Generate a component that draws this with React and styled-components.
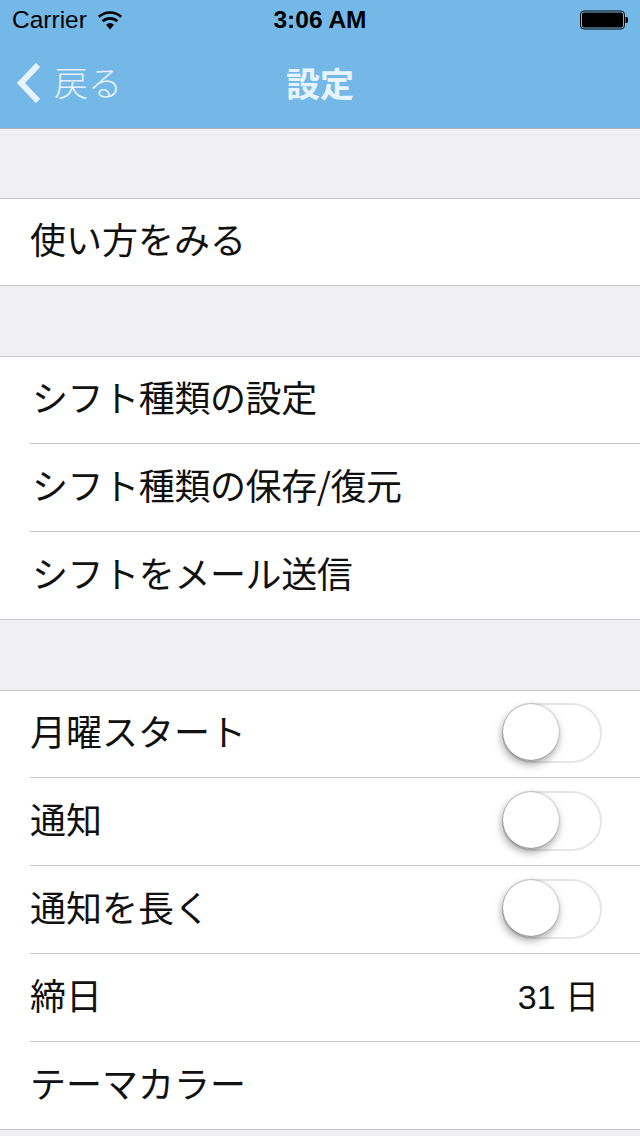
import React from 'react';
import styled, { createGlobalStyle } from 'styled-components';

const GlobalStyle = createGlobalStyle`
  html, body {
    margin: 0;
    padding: 0;
    background: #efeff4;
  }
  body {
    font-family: "Noto Sans CJK JP", "Liberation Sans", sans-serif;
  }
`;

const Screen = styled.div`
  width: 640px;
  height: 1136px;
  overflow: hidden;
  background: #efeff4;
`;

const Header = styled.header`
  height: 128px;
  background: #74b8e8;
  border-bottom: 1px solid #b5b0b2;
  display: flex;
  flex-direction: column;
`;

const StatusBar = styled.div`
  height: 40px;
  padding: 0 12px;
  display: grid;
  grid-template-columns: 1fr auto 1fr;
  align-items: center;
  font-family: "Liberation Sans", sans-serif;
  font-size: 24.5px;
  color: #000;
`;

const Carrier = styled.div`
  display: flex;
  align-items: center;
  gap: 10px;
`;

const Clock = styled.div`
  font-weight: 700;
`;

const Battery = styled.svg`
  justify-self: end;
`;

const NavBar = styled.div`
  position: relative;
  height: 88px;
  display: flex;
  align-items: center;
  justify-content: center;
`;

const Back = styled.div`
  position: absolute;
  left: 16px;
  top: 22px;
  display: flex;
  align-items: center;
  gap: 12px;
  font-size: 34px;
  line-height: 44px;
  font-weight: 300;
  color: #e4f1fb;
`;

const BackLabel = styled.span`
  margin-top: -2px;
`;

const Title = styled.div`
  font-size: 34px;
  font-weight: 700;
  color: #e8f4fd;
  line-height: 44px;
  margin-top: -2px;
`;

const Section = styled.section`
  margin-top: ${(p) => p.$gap}px;
  background: #fff;
  border-top: 1px solid #c8c7cc;
  border-bottom: 1px solid #c8c7cc;
`;

const Row = styled.div`
  height: ${(p) => (p.$first ? 86 : 87)}px;
  margin-left: 30px;
  padding-right: 42px;
  display: flex;
  align-items: center;
  justify-content: space-between;
  font-size: 36px;
  color: #111;
  border-top: ${(p) => (p.$first ? 'none' : '1px solid #c8c7cc')};
`;

const Label = styled.span`
  padding-bottom: 8px;
`;

// the katakana rows sit a little further in and run a little tighter
const ShiftLabel = styled(Label)`
  margin-left: 2px;
  letter-spacing: -0.4px;
`;

const Value = styled.span`
  font-family: "Liberation Sans", "Noto Sans CJK JP", sans-serif;
  font-size: 34px;
  padding-bottom: 6px;
  margin-right: -1px;
`;

const Track = styled.div`
  position: relative;
  width: 96px;
  height: 56px;
  margin-right: -4px;
  margin-bottom: 2px;
  border: 2px solid #e6e6e6;
  border-radius: 30px;
  background: #fff;
`;

const Knob = styled.div`
  position: absolute;
  left: -1px;
  top: -1px;
  width: 56px;
  height: 56px;
  border-radius: 50%;
  background: #fff;
  box-shadow: -1px 4px 9px rgba(0, 0, 0, 0.38), 0 0 2px rgba(0, 0, 0, 0.4);
`;

const Switch = () => (
  <Track>
    <Knob />
  </Track>
);

const Wifi = () => (
  <svg width="26" height="20" viewBox="0 0 26 20">
    <path d="M13 19.5 L9 14.8 A6.2 6.2 0 0 1 17 14.8 Z" fill="#000" />
    <path d="M5.6 11.2 A11 11 0 0 1 20.4 11.2" fill="none" stroke="#000" strokeWidth="2.6" />
    <path d="M1.8 6.8 A16.6 16.6 0 0 1 24.2 6.8" fill="none" stroke="#000" strokeWidth="2.6" />
  </svg>
);

export default function App() {
  return (
    <Screen>
      <GlobalStyle />
      <Header>
        <StatusBar>
          <Carrier>
            Carrier
            <Wifi />
          </Carrier>
          <Clock>3:06 AM</Clock>
          <Battery width="48" height="20" viewBox="0 0 48 20">
            <rect x="0.5" y="1" width="44" height="18" rx="3.5" fill="none" stroke="#000" strokeWidth="1" />
            <rect x="2" y="2.5" width="41" height="15" rx="2" fill="#000" />
            <path d="M45.5 7 h1 a1.5 1.5 0 0 1 1.5 1.5 v3 a1.5 1.5 0 0 1 -1.5 1.5 h-1 Z" fill="#000" />
          </Battery>
        </StatusBar>
        <NavBar>
          <Back>
            <svg width="26" height="42" viewBox="0 0 26 42">
              <path d="M22 3 L5 21 L22 39" fill="none" stroke="#e8f4fd" strokeWidth="6" />
            </svg>
            <BackLabel>戻る</BackLabel>
          </Back>
          <Title>設定</Title>
        </NavBar>
      </Header>

      <Section $gap={69}>
        <Row $first><Label>使い方をみる</Label></Row>
      </Section>

      <Section $gap={70}>
        <Row $first><ShiftLabel>シフト種類の設定</ShiftLabel></Row>
        <Row><ShiftLabel>シフト種類の保存/復元</ShiftLabel></Row>
        <Row><ShiftLabel>シフトをメール送信</ShiftLabel></Row>
      </Section>

      <Section $gap={70}>
        <Row $first>
          <Label>月曜スタート</Label>
          <Switch />
        </Row>
        <Row>
          <Label>通知</Label>
          <Switch />
        </Row>
        <Row>
          <Label>通知を長く</Label>
          <Switch />
        </Row>
        <Row>
          <Label>締日</Label>
          <Value>31 日</Value>
        </Row>
        <Row><Label>テーマカラー</Label></Row>
      </Section>
    </Screen>
  );
}
